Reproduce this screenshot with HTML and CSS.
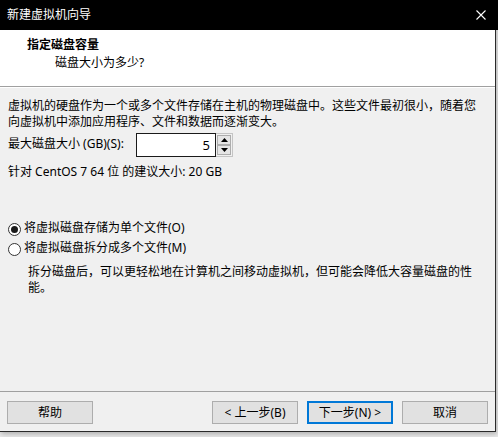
FILE: index.html
```html
<!DOCTYPE html>
<html lang="zh-CN">
<head>
<meta charset="utf-8">
<title>新建虚拟机向导</title>
<link rel="stylesheet" href="styles.css">
</head>
<body>
<div class="window">
  <div class="titlebar">
    <span class="title">新建虚拟机向导</span>
    <svg class="close" width="10" height="10" viewBox="0 0 10 10"><path d="M0.5 0.5L9.5 9.5M9.5 0.5L0.5 9.5" stroke="#fff" stroke-width="1.1" fill="none"/></svg>
  </div>
  <div class="header">
    <div class="h-title">指定磁盘容量</div>
    <div class="h-sub">磁盘大小为多少?</div>
  </div>
  <div class="content">
    <p class="intro">虚拟机的硬盘作为一个或多个文件存储在主机的物理磁盘中。这些文件最初很小，随着您<br>向虚拟机中添加应用程序、文件和数据而逐渐变大。</p>
    <div class="spin-row">
      <span class="spin-label">最大磁盘大小 (GB)(S):</span>
      <div class="spin-input">5</div>
      <div class="spin-btns">
        <div class="spin-btn"><svg width="7" height="4" viewBox="0 0 7 4"><path d="M3.5 0L7 4H0Z" fill="#000"/></svg></div>
        <div class="spin-btn"><svg width="7" height="4" viewBox="0 0 7 4"><path d="M0 0H7L3.5 4Z" fill="#000"/></svg></div>
      </div>
    </div>
    <p class="suggest">针对 CentOS 7 64 位 的建议大小: 20 GB</p>
    <div class="radio-row">
      <span class="radio checked"></span>
      <span class="radio-text">将虚拟磁盘存储为单个文件(O)</span>
    </div>
    <div class="radio-row">
      <span class="radio"></span>
      <span class="radio-text">将虚拟磁盘拆分成多个文件(M)</span>
    </div>
    <p class="desc">拆分磁盘后，可以更轻松地在计算机之间移动虚拟机，但可能会降低大容量磁盘的性<br>能。</p>
  </div>
  <div class="footer">
    <button class="btn">帮助</button>
    <div class="btn-group">
      <button class="btn">&lt; 上一步(B)</button>
      <button class="btn default">下一步(N) &gt;</button>
      <button class="btn">取消</button>
    </div>
  </div>
</div>
</body>
</html>
```

FILE: styles.css
```css
* { box-sizing: border-box; }
html, body {
  margin: 0;
  padding: 0;
  background: #e9e9e9;
  width: 498px;
  height: 437px;
  overflow: hidden;
}
body {
  font-family: "Noto Sans", "Noto Sans CJK SC", sans-serif;
  font-size: 12px;
  line-height: 16px;
  color: #000;
}
.window {
  width: 496px;
  height: 432px;
  background: #f0f0f0;
  border-right: 1px solid #2a2a2a;
  border-bottom: 1px solid #2a2a2a;
  display: flex;
  flex-direction: column;
  box-shadow: 1px 2px 5px rgba(0,0,0,0.25);
}
.titlebar {
  height: 30px;
  margin-right: -3px;
  background: #000;
  color: #fff;
  display: flex;
  align-items: center;
  padding-left: 7px;
  padding-right: 12px;
  flex: none;
}
.title { flex: 1; }
.close { display: block; margin-top: -1px; }
.header {
  height: 57px;
  background: #fff;
  border-bottom: 1px solid #a0a0a0;
  padding: 7px 0 0 27px;
  flex: none;
}
.h-title { font-weight: bold; }
.h-sub { margin-top: 2px; padding-left: 28px; }
.content {
  flex: 1;
  border-top: 1px solid #fff;
  padding: 10px 8px 0 8px;
}
.intro { margin: 0; }
.spin-row {
  display: flex;
  align-items: center;
  margin-top: 3px;
  height: 24px;
}
.spin-label { width: 128px; flex: none; margin-top: -3px; }
.spin-input {
  width: 80px;
  height: 24px;
  background: #fff;
  border: 1px solid #1a1a1a;
  text-align: right;
  padding: 3px 5px 0 0;
  font-size: 13px;
}
.spin-btns {
  width: 17px;
  height: 24px;
  border: 1px solid #c4c4c4;
  border-left: none;
  background: #f0f0f0;
  display: flex;
  flex-direction: column;
  padding: 1px;
  gap: 0;
}
.spin-btn {
  flex: 1;
  border: 1px solid #adadad;
  background: #e5e5e5;
  display: flex;
  align-items: center;
  justify-content: center;
}
.spin-btn svg { display: block; }
.suggest { margin: 7px 0 0 0; }
.radio-row {
  display: flex;
  align-items: flex-start;
  height: 20px;
}
.suggest + .radio-row { margin-top: 39px; }
.radio {
  width: 13px;
  height: 13px;
  border: 1px solid #333;
  border-radius: 50%;
  background: #fff;
  margin-top: 4px;
  margin-right: 3px;
  flex: none;
  display: flex;
  align-items: center;
  justify-content: center;
}
.radio.checked::after {
  content: "";
  width: 7px;
  height: 7px;
  border-radius: 50%;
  background: #1a1a1a;
}
.radio-text { padding-top: 1px; }
.desc { margin: 5px 0 0 20px; }
.footer {
  height: 40px;
  flex: none;
  border-top: 1px solid #a0a0a0;
  padding: 9px 7px 7px 7px;
  display: flex;
  justify-content: space-between;
}
.btn-group { display: flex; gap: 9px; }
.btn {
  width: 86px;
  height: 23px;
  background: #e1e1e1;
  border: 1px solid #adadad;
  font-family: inherit;
  font-size: 12px;
  line-height: 16px;
  color: #000;
  padding: 0;
  margin: 0;
}
.btn.default { border: 2px solid #0078d7; }
```
